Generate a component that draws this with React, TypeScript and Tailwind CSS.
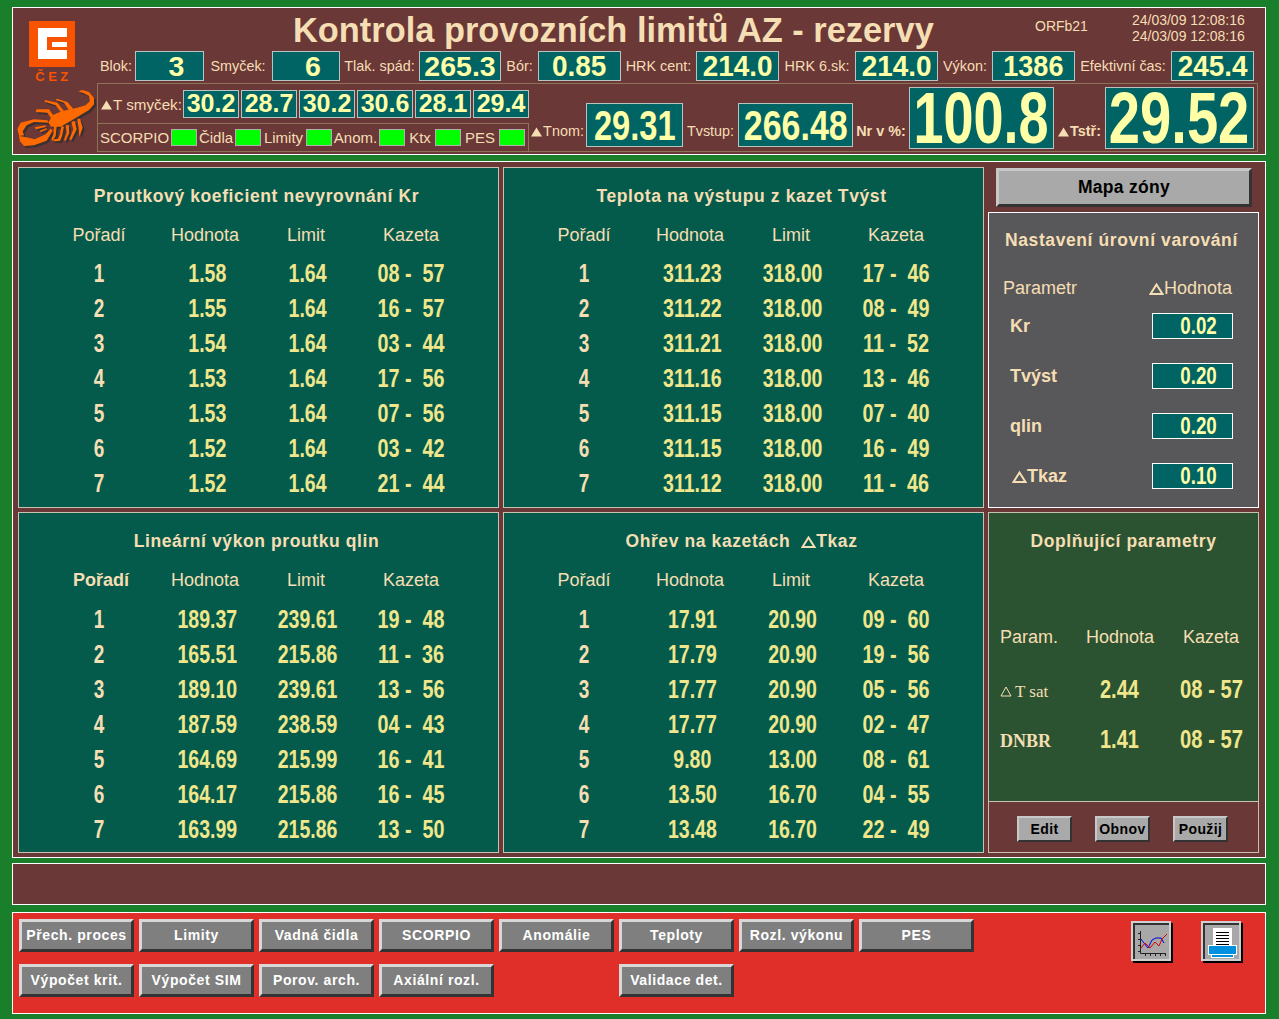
import React from "react";

const arial = { fontFamily: '"Liberation Sans", Arial, sans-serif' };

function Squeezed({ children, className = "" }: { children: React.ReactNode; className?: string }) {
  return <span className={`inline-block whitespace-pre ${className}`}>{children}</span>;
}

function Lbl({ w, children, className = "" }: { w: number; children: React.ReactNode; className?: string }) {
  return (
    <span style={{ width: w }} className={`shrink-0 whitespace-nowrap text-[14.4px] leading-none text-[#f5deb3] text-center ${className}`}>
      {children}
    </span>
  );
}

function Box({ w, h, children, className = "" }: { w: number; h: number; children?: React.ReactNode; className?: string }) {
  return (
    <span
      style={{ width: w, height: h }}
      className={`shrink-0 flex items-center justify-center border border-[#b9c4c0] bg-[#006464] font-bold text-[#ffffa8] ${className}`}
    >
      {children}
    </span>
  );
}

function Led() {
  return <span className="h-[17px] w-[26px] shrink-0 border border-[#b0b0b0] bg-[#00ff00]" />;
}

function Tri({ w = 11, h = 10 }: { w?: number; h?: number }) {
  return (
    <svg width={w} height={h} viewBox="0 0 12 10" className="inline-block shrink-0 align-[-1px]">
      <path d="M6 0 L12 10 H0 Z" fill="#f5deb3" />
    </svg>
  );
}

function Scorpion() {
  const body = (
    <g>
      <path d="M103 110 L115 88 L145 75 L190 65 L215 58 L228 45 L225 30 L210 22 L193 16 L205 12 L225 18 L240 35 L240 55 L225 72 L195 90 L170 105 L140 122 L112 122 Z" />
      <path d="M140 78 L125 58 L92 47 L92 42 L130 50 L150 74 Z" />
      <path d="M165 72 L150 50 L125 42 L128 38 L160 48 L178 68 Z" />
      <path d="M110 95 L100 80 L65 78 L68 70 L105 70 L118 88 Z" />
      <path d="M120 118 L128 120 L125 150 L115 165 L112 160 L118 145 Z" />
      <path d="M142 120 L150 122 L144 150 L138 165 L118 166 L120 160 L132 158 L138 145 Z" />
      <path d="M155 118 L164 116 L166 140 L154 165 L150 162 L158 140 Z" />
      <path d="M172 108 L182 104 L188 130 L172 162 L166 160 L178 130 Z" />
      <path d="M190 98 L198 98 L206 125 L196 152 L194 125 Z" />
      <path d="M10 130 L20 110 L60 100 L100 103 L104 110 L60 108 L38 118 L26 136 L30 148 L16 150 Z" />
      <path d="M15 150 L30 152 L62 160 L95 145 L110 128 L116 134 L98 164 L60 178 L30 180 L18 166 Z" />
      <path d="M62 124 L95 118 L96 122 L66 130 Z M76 134 L98 126 L99 130 L80 138 Z" />
    </g>
  );
  return (
    <svg width="86" height="65" viewBox="0 0 258 195" className="block">
      <g fill="#3a3030" transform="translate(6 6)">{body}</g>
      <g fill="#ff6a00">{body}</g>
    </svg>
  );
}

function CezLogo() {
  return (
    <div className="flex w-[46px] flex-col items-center">
      <svg width="46" height="46" viewBox="0 0 46 46" className="block" shapeRendering="crispEdges">
        <rect width="46" height="46" fill="#f85400" />
        <path d="M9 7 H38 V16 H18 V29 H38 V38 H9 Z" fill="#fff" />
        <rect x="23" y="21" width="15" height="5" fill="#fff" />
      </svg>
      <span className="mt-[3px] whitespace-nowrap pl-[3px] text-[13px] font-bold leading-[13px] tracking-[3.5px] text-[#f85400]">ČEZ</span>
    </div>
  );
}

function Header() {
  const n = "text-[28.5px] leading-none";
  const m = "text-[30px] leading-none";
  return (
    <header className="flex h-[148px] shrink-0 border border-white bg-[#6b3838]">
      <div className="flex w-[84px] shrink-0 flex-col">
        <div className="mt-[13px] pl-[16px]"><CezLogo /></div>
        <div className="mt-[3px] pl-[1px]"><Scorpion /></div>
      </div>
      <div className="flex min-w-0 flex-1 flex-col">
        <div className="flex h-[43px] items-start">
          <h1 className="ml-[196px] mt-[3px] w-[641px] shrink-0 whitespace-nowrap text-[34.4px] font-bold leading-[38px] text-[#f5deb3]">
            Kontrola provozních limitů AZ - rezervy
          </h1>
          <span className="ml-[101px] mt-[10px] shrink-0 text-[14px] leading-4 text-[#f5deb3]">ORFb21</span>
          <div className="ml-[44px] mt-[4px] flex shrink-0 flex-col text-[14px] leading-4 text-[#f5deb3]">
            <span>24/03/09 12:08:16</span>
            <span>24/03/09 12:08:16</span>
          </div>
        </div>
        <div className="flex h-[30px] items-center">
          <Lbl w={38}>Blok:</Lbl>
          <Box w={69} h={30} className={`${n} pl-[14px]`}>3</Box>
          <Lbl w={68}>Smyček:</Lbl>
          <Box w={68} h={30} className={`${n} pl-[14px]`}>6</Box>
          <Lbl w={79}>Tlak. spád:</Lbl>
          <Box w={82} h={30} className={n}>265.3</Box>
          <Lbl w={37}>Bór:</Lbl>
          <Box w={83} h={30} className={m}><Squeezed className="scale-x-[0.93]">0.85</Squeezed></Box>
          <Lbl w={75}>HRK cent:</Lbl>
          <Box w={83} h={30} className={m}><Squeezed className="scale-x-[0.93]">214.0</Squeezed></Box>
          <Lbl w={76}>HRK 6.sk:</Lbl>
          <Box w={83} h={30} className={m}><Squeezed className="scale-x-[0.93]">214.0</Squeezed></Box>
          <Lbl w={54}>Výkon:</Lbl>
          <Box w={83} h={30} className={m}><Squeezed className="scale-x-90">1386</Squeezed></Box>
          <Lbl w={96}>Efektivní čas:</Lbl>
          <Box w={83} h={30} className={m}><Squeezed className="scale-x-[0.93]">245.4</Squeezed></Box>
        </div>
        <div className="mt-[2px] flex h-[69px] w-[1161px] border border-[#8e7358]">
          <div className="flex w-[431px] shrink-0 flex-col">
            <div className="flex h-[40px] items-center gap-[2px]">
              <span className="flex w-[83px] shrink-0 items-center gap-[1px] whitespace-nowrap pl-[3px] pt-[2px] text-[15.2px] leading-none text-[#f5deb3]">
                <Tri />T smyček:
              </span>
              {["30.2", "28.7", "30.2", "30.6", "28.1", "29.4"].map((v, i) => (
                <Box key={i} w={56} h={28} className="text-[25px] leading-none">{v}</Box>
              ))}
            </div>
            <div className="flex h-[28px] items-center border-t border-r border-[#8e7358] text-[15px] leading-none text-[#f5deb3]">
              <span className="w-[73px] shrink-0 pl-[2px]">SCORPIO</span>
              <Led />
              <span className="w-[38px] shrink-0 text-center">Čidla</span>
              <Led />
              <span className="w-[45px] shrink-0 text-center">Limity</span>
              <Led />
              <span className="w-[47px] shrink-0 text-center">Anom.</span>
              <Led />
              <span className="w-[30px] shrink-0 text-center">Ktx</span>
              <Led />
              <span className="w-[38px] shrink-0 text-center">PES</span>
              <Led />
            </div>
          </div>
          <div className="flex min-w-0 flex-1 items-center">
            <Lbl w={57} className="mt-[28px]"><span className="flex items-center justify-center gap-[1px]"><Tri />Tnom:</span></Lbl>
            <Box w={97} h={44} className="mt-[15px] text-[43px] leading-none"><Squeezed className="-mx-[10px] scale-x-[0.76]">29.31</Squeezed></Box>
            <Lbl w={55} className="mt-[28px]">Tvstup:</Lbl>
            <Box w={115} h={44} className="mt-[15px] text-[43px] leading-none"><Squeezed className="-mx-[10px] scale-x-[0.79]">266.48</Squeezed></Box>
            <Lbl w={56} className="mt-[28px] font-bold">Nr v %:</Lbl>
            <Box w={145} h={62} className="text-[72px] leading-none"><Squeezed className="-mx-[20px] scale-x-[0.75]">100.8</Squeezed></Box>
            <Lbl w={51} className="mt-[28px] font-bold"><span className="flex items-center justify-center gap-[1px]"><Tri />Tstř:</span></Lbl>
            <Box w={149} h={62} className="text-[72px] leading-none"><Squeezed className="-mx-[20px] scale-x-[0.78]">29.52</Squeezed></Box>
          </div>
        </div>
      </div>
    </header>
  );
}

type Row = [string, string, string];

function DataTable({ title, rows, boldFirst, lower }: { title: React.ReactNode; rows: Row[]; boldFirst?: boolean; lower?: boolean }) {
  const cols = "grid grid-cols-[106px_106px_96px_114px] pl-[27px]";
  return (
    <section className="h-full border border-[#c9c2b0] bg-[#055b4b] text-[#f5deb3]">
      <h2 className="mt-[17px] h-[22px] whitespace-pre pr-[4px] text-center text-[17.5px] font-bold leading-[22px] tracking-[0.6px]">{title}</h2>
      <div className={`${cols} mt-[17px] h-[22px] items-center text-center text-[18px] leading-[22px]`}>
        <span className={boldFirst ? "pl-[4px] font-bold" : ""}>Pořadí</span>
        <span>Hodnota</span>
        <span>Limit</span>
        <span>Kazeta</span>
      </div>
      <div className={lower ? "mt-[11px]" : "mt-[10px]"}>
        {rows.map((r, i) => (
          <div key={i} className={`${cols} h-[35px] items-center text-center text-[25px] font-bold leading-[35px]`}>
            <Squeezed className="scale-x-[0.76]">{i + 1}</Squeezed>
            <Squeezed className="scale-x-[0.78] pl-[6px] text-[#f0e68c]">{r[0]}</Squeezed>
            <Squeezed className="scale-x-[0.78] pl-[4px] text-[#f0e68c]">{r[1]}</Squeezed>
            <Squeezed className="scale-x-[0.79] text-[#f0e68c]">{r[2]}</Squeezed>
          </div>
        ))}
      </div>
    </section>
  );
}

const kr: Row[] = [["1.58","1.64","08 -  57"],["1.55","1.64","16 -  57"],["1.54","1.64","03 -  44"],["1.53","1.64","17 -  56"],["1.53","1.64","07 -  56"],["1.52","1.64","03 -  42"],["1.52","1.64","21 -  44"]];
const tv: Row[] = [["311.23","318.00","17 -  46"],["311.22","318.00","08 -  49"],["311.21","318.00","11 -  52"],["311.16","318.00","13 -  46"],["311.15","318.00","07 -  40"],["311.15","318.00","16 -  49"],["311.12","318.00","11 -  46"]];
const ql: Row[] = [["189.37","239.61","19 -  48"],["165.51","215.86","11 -  36"],["189.10","239.61","13 -  56"],["187.59","238.59","04 -  43"],["164.69","215.99","16 -  41"],["164.17","215.86","16 -  45"],["163.99","215.86","13 -  50"]];
const tk: Row[] = [["17.91","20.90","09 -  60"],["17.79","20.90","19 -  56"],["17.77","20.90","05 -  56"],["17.77","20.90","02 -  47"],["9.80","13.00","08 -  61"],["13.50","16.70","04 -  55"],["13.48","16.70","22 -  49"]];

function Delta() {
  return (
    <svg width="15" height="12" viewBox="0 0 15 12" className="inline-block align-[-1px]">
      <path d="M7.5 1.5 L13.5 11 H1.5 Z" fill="none" stroke="#f5deb3" strokeWidth="2" />
    </svg>
  );
}

function WarnRow({ label, value, delta }: { label: string; value: string; delta?: boolean }) {
  return (
    <div className="flex h-[50px] items-center">
      <span className={`${delta ? "pl-[9px]" : "pl-[7px]"} w-[149px] shrink-0 text-[18px] font-bold leading-none`}>
        {delta && <Delta />}{label}
      </span>
      <span className="flex h-[26px] w-[81px] shrink-0 items-center justify-end border border-white bg-[#006464] pr-[15px] text-[24px] font-bold leading-none text-[#ffffa8]">
        <Squeezed className="origin-right scale-x-[0.78]">{value}</Squeezed>
      </span>
    </div>
  );
}

function SmallBtn({ children }: { children: React.ReactNode }) {
  return (
    <button className="flex h-[26px] w-[55px] items-center justify-center border-2 border-t-[#c8c8c8] border-l-[#c8c8c8] border-r-[#333] border-b-[#333] bg-[#a9a9a9] text-[14px] font-bold leading-none tracking-[0.4px] text-black">
      {children}
    </button>
  );
}

function SidePanels() {
  const cols = "grid-cols-[97px_97px_76px]";
  const num = "text-[25px] font-bold leading-none text-[#f0e68c]";
  const serif = { fontFamily: '"Liberation Serif", serif' };
  return (
    <aside className="flex w-[271px] shrink-0 flex-col">
      <div className="h-[45px] shrink-0 pl-[8px] pt-[1px]">
        <button className="flex h-[39px] w-[256px] items-center justify-center border-[3px] border-t-[#c8c8c8] border-l-[#c8c8c8] border-r-[#333] border-b-[#333] bg-[#a9a9a9] text-[17.5px] font-bold leading-none tracking-[0.3px] text-black">
          Mapa zóny
        </button>
      </div>
      <section className="h-[296px] shrink-0 border border-white bg-[#58585a] pl-[14px] text-[#f5deb3]">
        <h2 className="ml-[2px] mt-[16px] h-[22px] whitespace-nowrap text-[17.5px] font-bold leading-[22px] tracking-[0.6px]">Nastavení úrovní varování</h2>
        <div className="mt-[26px] flex h-[22px] items-center text-[18px] leading-[22px]">
          <span className="w-[146px] shrink-0">Parametr</span>
          <span className="whitespace-nowrap"><Delta />Hodnota</span>
        </div>
        <div className="mt-[2px]">
          <WarnRow label="Kr" value="0.02" />
          <WarnRow label="Tvýst" value="0.20" />
          <WarnRow label="qlin" value="0.20" />
          <WarnRow label="Tkaz" value="0.10" delta />
        </div>
      </section>
      <section className="mt-[4px] flex h-[341px] shrink-0 flex-col border border-[#c9c2b0] text-[#f5deb3]">
        <div className="h-[289px] shrink-0 border-b border-[#c9c2b0] bg-[#2b5331]">
          <h2 className="mt-[17px] h-[22px] text-center text-[17.5px] font-bold leading-[22px] tracking-[0.6px]">Doplňující parametry</h2>
          <div className={`mt-[74px] grid h-[22px] ${cols} items-center text-[18px] leading-[22px]`}>
            <span className="pl-[11px]">Param.</span>
            <span>Hodnota</span>
            <span>Kazeta</span>
          </div>
          <div className={`mt-[16px] grid h-[50px] ${cols} items-center`}>
            <span className="mt-[4px] flex items-center whitespace-nowrap pl-[11px] text-[17px] leading-none" style={serif}>
              <svg width="12" height="11" viewBox="0 0 12 11" className="mr-[3px]"><path d="M6 1 L11 10 H1 Z" fill="none" stroke="#f5deb3" /></svg>
              T sat
            </span>
            <Squeezed className={`origin-left translate-x-[14px] scale-x-[0.8] ${num}`}>2.44</Squeezed>
            <Squeezed className={`origin-left -translate-x-[3px] scale-x-[0.81] ${num}`}>08 - 57</Squeezed>
          </div>
          <div className={`grid h-[50px] ${cols} items-center`}>
            <span className="mt-[4px] pl-[11px] text-[18px] font-bold leading-none" style={serif}>DNBR</span>
            <Squeezed className={`origin-left translate-x-[14px] scale-x-[0.8] ${num}`}>1.41</Squeezed>
            <Squeezed className={`origin-left -translate-x-[3px] scale-x-[0.81] ${num}`}>08 - 57</Squeezed>
          </div>
        </div>
        <div className="flex flex-1 items-start gap-[23px] bg-[#6b3838] pl-[28px] pt-[14px]">
          <SmallBtn>Edit</SmallBtn>
          <SmallBtn>Obnov</SmallBtn>
          <SmallBtn>Použij</SmallBtn>
        </div>
      </section>
    </aside>
  );
}

function NavBtn({ children }: { children?: React.ReactNode }) {
  return (
    <button className="flex h-[33px] w-[115px] shrink-0 items-center justify-center border-[3px] border-t-[#d8d8d8] border-l-[#d8d8d8] border-r-[#333] border-b-[#333] bg-[#7f7f7f] pb-[2px] text-[14px] font-bold leading-none tracking-[0.6px] text-white">
      {children}
    </button>
  );
}

function IconFrame({ children, ml }: { children: React.ReactNode; ml: number }) {
  return (
    <div style={{ marginLeft: ml }} className="mt-[2px] h-[40px] w-[40px] shrink-0 border-2 border-[#d0d0d0] bg-[#a8a8a8] shadow-[2px_2px_0_#000]">
      {children}
    </div>
  );
}

function Footer() {
  const row1 = ["Přech. proces", "Limity", "Vadná čidla", "SCORPIO", "Anomálie", "Teploty", "Rozl. výkonu", "PES"];
  const row2 = ["Výpočet krit.", "Výpočet SIM", "Porov. arch.", "Axiální rozl."];
  return (
    <footer className="h-[102px] shrink-0 border border-white bg-[#e02f28] pl-[6px] pt-[6px]">
      <div className="flex h-[33px] gap-[5px]">
        {row1.map((t) => <NavBtn key={t}>{t}</NavBtn>)}
        <IconFrame ml={152}>
          <svg width="36" height="36" viewBox="0 0 36 36" className="block">
            <path d="M1 36 V1 H36" fill="none" stroke="#333" strokeWidth="2" />
            <path d="M7.5 8 V30.5 H33 M5 10.5 H7.5 M5 16.5 H7.5 M5 22.5 H7.5 M5 28.5 H7.5 M12.5 30.5 V33 M17.5 30.5 V33 M22.5 30.5 V33 M27.5 30.5 V33 M32.5 30.5 V33" fill="none" stroke="#222" />
            <path d="M8 16 L11 20 L15 25 L19 17 L23 15 L28 15 L31 20" fill="none" stroke="#0000e0" />
            <path d="M8 25 L12 20 L17 25 L22 19 L26 23 L29 16 L34 11" fill="none" stroke="#e00000" />
          </svg>
        </IconFrame>
        <IconFrame ml={25}>
          <svg width="36" height="36" viewBox="0 0 36 36" className="block">
            <path d="M1 36 V1 H36" fill="none" stroke="#333" strokeWidth="2" />
            <rect x="10" y="5" width="19" height="18" fill="#fff" />
            <path d="M13 9.5 H26 M13 12.5 H26 M13 15.5 H26 M13 18.5 H26 M13 21.5 H26" stroke="#000" />
            <rect x="5.5" y="22.5" width="28" height="9" fill="#0090e0" stroke="#fff" />
            <rect x="8.5" y="31.5" width="22" height="3" fill="#0090e0" stroke="#fff" />
          </svg>
        </IconFrame>
      </div>
      <div className="mt-[12px] flex gap-[5px]">
        {row2.map((t) => <NavBtn key={t}>{t}</NavBtn>)}
        <div className="w-[115px] shrink-0" />
        <NavBtn>Validace det.</NavBtn>
      </div>
    </footer>
  );
}

export default function App() {
  return (
    <div style={arial} className="flex h-[1019px] w-[1279px] flex-col overflow-hidden bg-[#1a7f2a] pl-[12px] pr-[13px] pt-[7px]">
      <Header />
      <main className="mt-[6px] flex h-[697px] shrink-0 gap-[4px] border border-white bg-[#6b3838] pl-[5px] pt-[5px]">
        <div className="grid w-[966px] shrink-0 grid-cols-[481px_481px] grid-rows-[341px_341px] gap-[4px]">
          <DataTable title="Proutkový koeficient nevyrovnání Kr" rows={kr} />
          <DataTable title="Teplota na výstupu z kazet Tvýst" rows={tv} />
          <DataTable title="Lineární výkon proutku qlin" rows={ql} boldFirst lower />
          <DataTable title={<>Ohřev na kazetách  <Delta />Tkaz</>} rows={tk} lower />
        </div>
        <SidePanels />
      </main>
      <div className="mt-[5px] h-[42px] shrink-0 border border-white bg-[#6b3838]" />
      <div className="h-[7px] shrink-0" />
      <Footer />
    </div>
  );
}
